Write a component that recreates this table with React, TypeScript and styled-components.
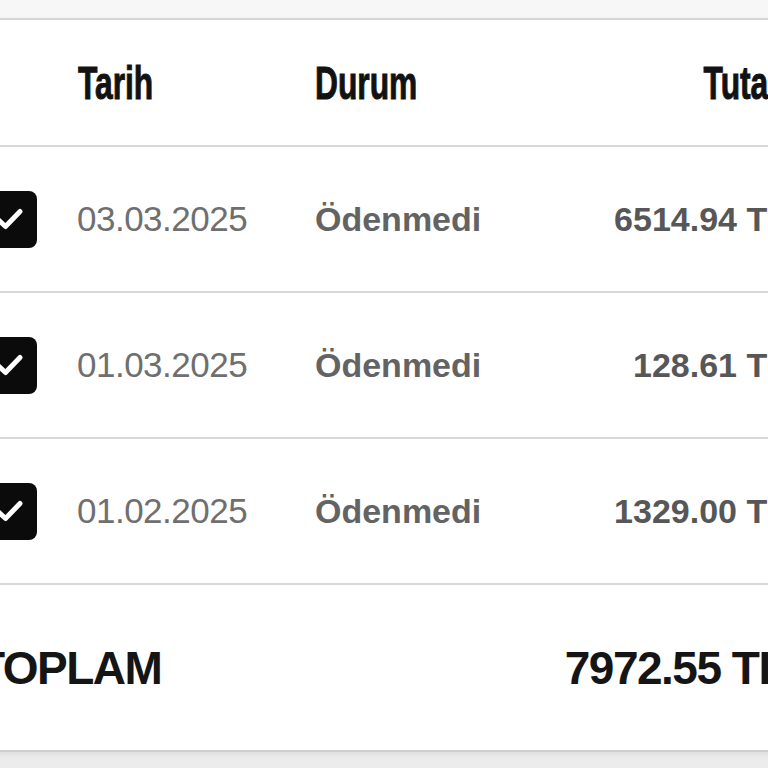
import React from "react";
import styled, { createGlobalStyle } from "styled-components";

const Global = createGlobalStyle`
  html, body { margin: 0; padding: 0; background: #ebebeb; }
  body { font-family: "Liberation Sans", Arial, sans-serif; }
`;

const Page = styled.div`
  width: 768px;
  height: 768px;
  overflow: hidden;
  display: flex;
  flex-direction: column;
  background: linear-gradient(#e2e2e2, #ececec 12px, #ececec);
`;

const TopBand = styled.div`
  height: 18px;
  flex: none;
  background: #f7f7f7;
`;

const Card = styled.div`
  flex: none;
  width: 808px;
  margin-left: -48px;
  padding: 0 28px;
  background: #ffffff;
  border-top: 2px solid #d6d6d6;
  border-bottom: 2px solid #cfcfcf;
  box-shadow: 0 2px 6px rgba(0, 0, 0, 0.08);
`;

const Row = styled.div<{ $h: number }>`
  display: grid;
  grid-template-columns: 98px 237px 1fr 240px;
  align-items: center;
  height: ${(p) => p.$h}px;
  border-bottom: 2px solid #d8d8d8;
`;

const HeadCell = styled.div<{ $right?: boolean }>`
  text-align: ${(p) => (p.$right ? "right" : "left")};
  padding-right: ${(p) => (p.$right ? "7px" : "0")};
`;

const HeadLabel = styled.span<{ $right?: boolean }>`
  display: inline-block;
  font-family: "Liberation Sans", Arial, sans-serif;
  font-weight: 700;
  font-size: 46px;
  color: #121212;
  -webkit-text-stroke: 1px #121212;
  transform: scaleX(0.69);
  transform-origin: ${(p) => (p.$right ? "right" : "left")} center;
`;

const Box = styled.div`
  width: 57px;
  height: 57px;
  border-radius: 8px;
  background: #0b0b0b;
  display: flex;
  align-items: center;
  justify-content: center;
`;

const DateText = styled.div`
  font-size: 35px;
  color: #6f6f6f;
  letter-spacing: -0.5px;
  margin-left: -1px;
`;

const Status = styled.div`
  font-size: 34px;
  font-weight: 700;
  color: #636363;
`;

const Amount = styled.div`
  font-size: 34px;
  font-weight: 700;
  color: #575757;
  text-align: right;
`;

const Footer = styled.div`
  display: flex;
  align-items: center;
  justify-content: space-between;
  height: 165px;
  margin-left: -3px;
  padding-right: 3px;
`;

const TotalText = styled.div`
  font-size: 46px;
  font-weight: 700;
  color: #151515;
  letter-spacing: -1.5px;
`;

const Check = () => (
  <Box>
    <svg width="30" height="24" viewBox="0 0 30 24" fill="none">
      <path
        d="M4 12.5 L11.5 19.5 L26 4.5"
        stroke="#ffffff"
        strokeWidth="5"
        strokeLinecap="round"
        strokeLinejoin="round"
      />
    </svg>
  </Box>
);

const rows = [
  { date: "03.03.2025", status: "Ödenmedi", amount: "6514.94 TL" },
  { date: "01.03.2025", status: "Ödenmedi", amount: "128.61 TL" },
  { date: "01.02.2025", status: "Ödenmedi", amount: "1329.00 TL" },
];

export default function App() {
  return (
    <>
      <Global />
      <Page>
        <TopBand />
        <Card>
          <Row $h={125}>
            <HeadCell />
            <HeadCell>
              <HeadLabel>Tarih</HeadLabel>
            </HeadCell>
            <HeadCell>
              <HeadLabel>Durum</HeadLabel>
            </HeadCell>
            <HeadCell $right>
              <HeadLabel $right>Tutar</HeadLabel>
            </HeadCell>
          </Row>
          {rows.map((r) => (
            <Row $h={144} key={r.date}>
              <Check />
              <DateText>{r.date}</DateText>
              <Status>{r.status}</Status>
              <Amount>{r.amount}</Amount>
            </Row>
          ))}
          <Footer>
            <TotalText>TOPLAM</TotalText>
            <TotalText>7972.55 TL</TotalText>
          </Footer>
        </Card>
      </Page>
    </>
  );
}
